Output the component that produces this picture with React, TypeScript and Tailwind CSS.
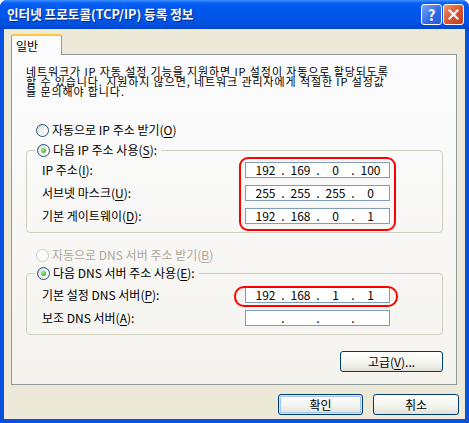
import { Fragment } from 'react';

const Radio = ({ checked = false, disabled = false }: { checked?: boolean; disabled?: boolean }) => {
  return (
    <span
      className={
        disabled
          ? 'flex h-[13px] w-[13px] shrink-0 items-center justify-center rounded-full border border-[#CAC8BB] bg-white'
          : 'flex h-[13px] w-[13px] shrink-0 items-center justify-center rounded-full border border-[#1C5180] bg-[linear-gradient(135deg,#D6D6CE,#FFFFFF_70%)]'
      }
    >
      {checked && (
        <span className="h-[5px] w-[5px] rounded-full bg-[radial-gradient(circle_at_35%_35%,#9CEB8E,#1FA01F)]" />
      )}
    </span>
  );
};

const U = ({ children }: { children: string }) => <span className="underline underline-offset-[2px]">{children}</span>;

const IpBox = ({ parts }: { parts: string[] }) => {
  return (
    <div className="flex h-[16px] w-[145px] shrink-0 items-center border border-[#7F9DB9] bg-white pl-[5px] leading-none">
      {parts.map((p, i) => (
        <Fragment key={i}>
          <span className="w-[29px] text-center">{p}</span>
          {i < 3 && <span className="w-[6px] text-center">.</span>}
        </Fragment>
      ))}
    </div>
  );
};

const XpButton = ({ children, className, isDefault = false }: { children: React.ReactNode; className: string; isDefault?: boolean }) => {
  return (
    <button
      className={
        'flex h-[21px] items-center justify-center rounded-[3px] border border-[#003C74] bg-[linear-gradient(to_bottom,#FFFFFF,#F4F4F0_55%,#E2E1D8)] text-[12px] leading-none ' +
        (isDefault ? 'shadow-[inset_0_0_0_1px_#CEE7FF,inset_0_0_0_2px_#A6C4EE] ' : '') +
        className
      }
    >
      {children}
    </button>
  );
};

const Row = ({ label, parts }: { label: React.ReactNode; parts: string[] }) => {
  return (
    <div className="flex h-[16px] items-center justify-between">
      <span>{label}</span>
      <IpBox parts={parts} />
    </div>
  );
};

export default function App() {
  return (
    <div className="relative h-[423px] w-[469px] bg-white font-['Noto_Sans_CJK_KR',sans-serif] text-[12px] text-black">
      <div className="flex h-full flex-col rounded-t-[7px] bg-[#0A50E0]">
        {/* title bar */}
        <div className="flex h-[29px] shrink-0 items-center rounded-t-[7px] bg-[linear-gradient(to_bottom,#3D8FFF_0%,#0A62F4_10%,#0058EE_25%,#0055E6_65%,#004FDD_85%,#0044CF_100%)] pl-[7px] pr-[5px]">
          <span className="flex-1 text-[12.6px] font-bold text-white [text-shadow:1px_1px_0_#0A2A8A]">
            인터넷 프로토콜(TCP/IP) 등록 정보
          </span>
          <div className="flex gap-[1px]">
            <div className="flex h-[21px] w-[21px] items-center justify-center rounded-[3px] border border-white bg-[linear-gradient(135deg,#7BA6F8,#2D67E4_60%,#2A5BD3)] text-[15px] font-bold leading-none text-white">
              ?
            </div>
            <div className="flex h-[21px] w-[21px] items-center justify-center rounded-[3px] border border-white bg-[linear-gradient(135deg,#F0936E,#D9532D_55%,#C2401D)]">
              <svg width="11" height="11" viewBox="0 0 11 11">
                <path d="M1.5 1.5 L9.5 9.5 M9.5 1.5 L1.5 9.5" stroke="white" strokeWidth="2" strokeLinecap="square" />
              </svg>
            </div>
          </div>
        </div>

        {/* body */}
        <div className="mx-[4px] mb-[4px] flex flex-1 flex-col bg-[#ECE9D8] pt-[5px]">
          <div className="relative z-10 -mb-[1px] ml-[7px] flex h-[21px] w-[51px] items-center rounded-t-[3px] border-x border-t-2 border-x-[#919B9C] border-t-[#FFC83C] bg-[#FCFCFE] pl-[4px]">
            일반
          </div>
          <div className="ml-[7px] mr-[8px] flex h-[331px] flex-col border border-[#919B9C] bg-[linear-gradient(to_bottom,#FCFCFE,#F4F3EE)] pl-[14px] pr-[13px] pt-[11px]">
            <p className="text-[11px] leading-[10px] tracking-[0.9px]">
              네트워크가 IP 자동 설정 기능을 지원하면 IP 설정이 자동으로 할당되도록
              <br />
              할 수 있습니다. 지원하지 않으면, 네트워크 관리자에게 적절한 IP 설정값
              <br />
              을 문의해야 합니다.
            </p>

            <div className="ml-[10px] mt-[27px] flex h-[14px] items-center gap-[3px]">
              <Radio />
              <span>
                자동으로 IP 주소 받기(<U>O</U>)
              </span>
            </div>

            <fieldset className="mt-[6px] rounded-[4px] border border-[#D0D0BF] pb-[8px] pl-[15px] pr-[52px]">
              <legend className="ml-[-7px] flex h-[14px] items-center gap-[3px] px-[2px] pr-[4px]">
                <Radio checked />
                <span>
                  다음 IP 주소 사용(<U>S</U>):
                </span>
              </legend>
              <div className="mt-[5px] flex flex-col gap-[7px]">
                <Row label={<>IP 주소(<U>I</U>):</>} parts={['192', '169', '0', '100']} />
                <Row label={<>서브넷 마스크(<U>U</U>):</>} parts={['255', '255', '255', '0']} />
                <Row label={<>기본 게이트웨이(<U>D</U>):</>} parts={['192', '168', '0', '1']} />
              </div>
            </fieldset>

            <div className="ml-[10px] mt-[15px] flex h-[14px] items-center gap-[3px] text-[#ACA899]">
              <Radio disabled />
              <span>
                자동으로 DNS 서버 주소 받기(<U>B</U>)
              </span>
            </div>

            <fieldset className="mt-[4px] rounded-[4px] border border-[#D0D0BF] pb-[8px] pl-[15px] pr-[52px]">
              <legend className="ml-[-7px] flex h-[14px] items-center gap-[3px] px-[2px] pr-[4px]">
                <Radio checked />
                <span>
                  다음 DNS 서버 주소 사용(<U>E</U>):
                </span>
              </legend>
              <div className="mt-[7px] flex flex-col gap-[7px]">
                <Row label={<>기본 설정 DNS 서버(<U>P</U>):</>} parts={['192', '168', '1', '1']} />
                <Row label={<>보조 DNS 서버(<U>A</U>):</>} parts={['', '', '', '']} />
              </div>
            </fieldset>

            <XpButton className="mt-[16px] w-[103px] self-end">
              <span>
                고급(<U>V</U>)...
              </span>
            </XpButton>
          </div>

          <div className="mt-[9px] flex justify-end gap-[10px] pr-[6px]">
            <XpButton className="w-[85px]" isDefault>
              확인
            </XpButton>
            <XpButton className="w-[86px]">취소</XpButton>
          </div>
        </div>
      </div>

      {/* red annotation marks */}
      <div className="absolute left-[239px] top-[157px] h-[74px] w-[157px] rounded-[9px] border-2 border-[#FF0000]" />
      <div className="absolute left-[234px] top-[286px] h-[21px] w-[164px] rounded-[10px] border-2 border-[#FF0000]" />
    </div>
  );
}
